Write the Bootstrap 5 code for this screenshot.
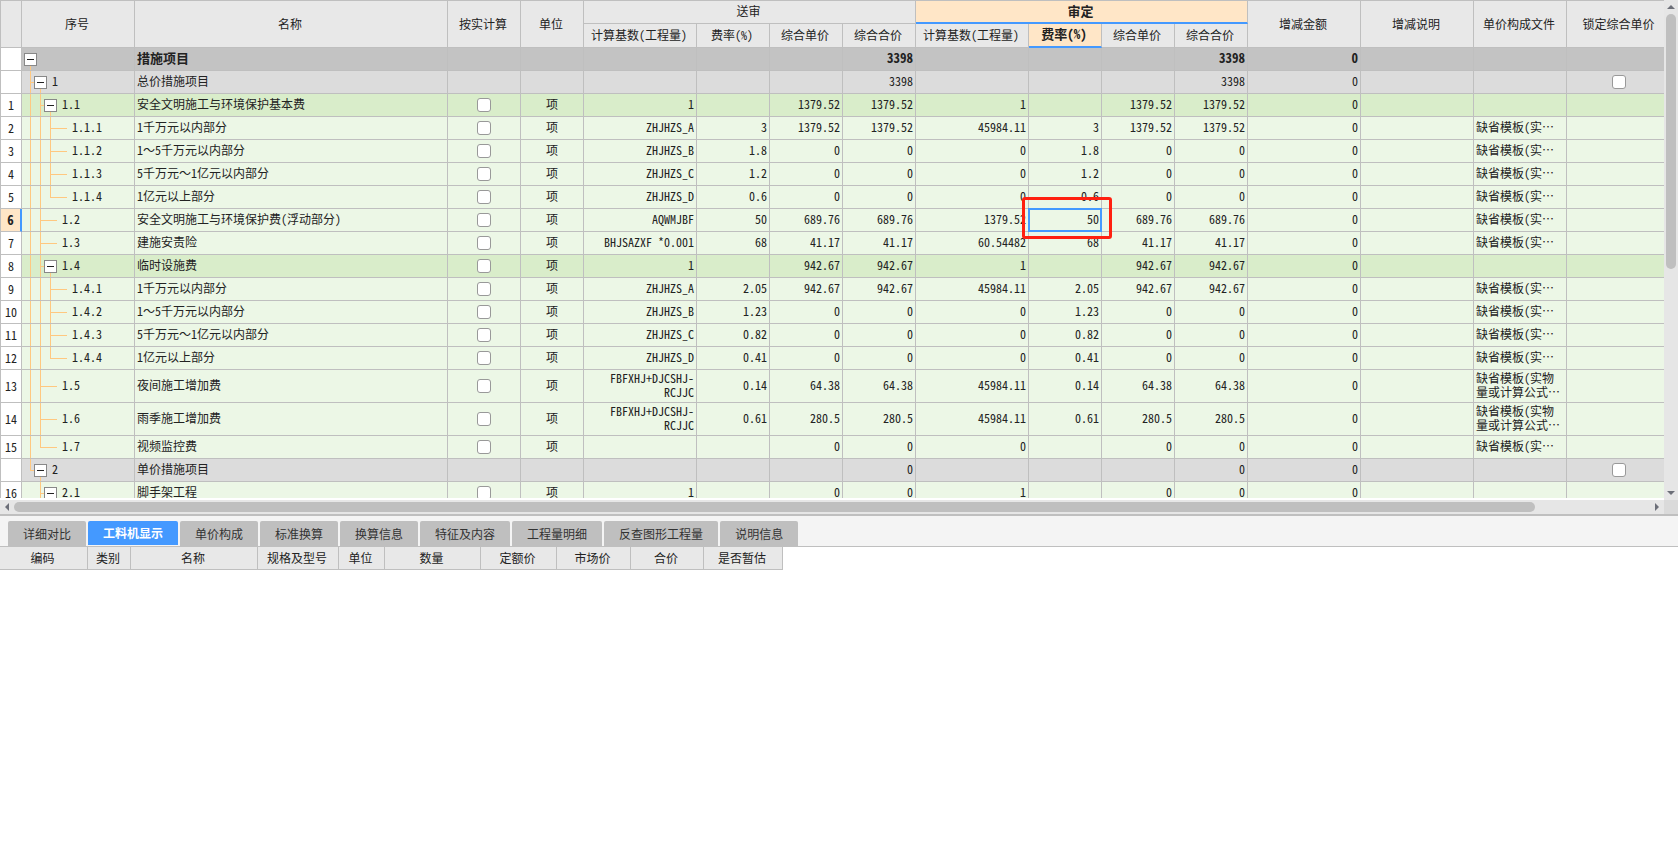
<!DOCTYPE html>
<html lang="zh-CN">
<head>
<meta charset="utf-8">
<meta name="viewport" content="width=device-width, initial-scale=1">
<title>措施项目</title>
<link href="https://cdn.jsdelivr.net/npm/bootstrap@5.3.0/dist/css/bootstrap.min.css" rel="stylesheet">
<style>
:root{--line:#bfbfbf;--head:#e8e8e8;--blue:#4499ff;--peach:#ffe6c7;--tree:#ffc880}
body{font:12px/14px "Noto Sans Mono CJK SC","Liberation Sans","Noto Sans CJK SC",sans-serif;color:#222;background:#fff}
.sheet{table-layout:fixed;border-collapse:separate;border-spacing:0;white-space:nowrap}
.sheet th,.sheet td{height:23px;padding:0 2px;border:0 solid var(--line);border-width:0 1px 1px 0;vertical-align:middle;overflow:hidden}
.sheet td{padding-bottom:2px}
.sheet thead th{background:var(--head);font-weight:400;text-align:center;padding:0 3px 0 1px}
.view{overflow:auto;scrollbar-width:none;border:solid var(--line);border-width:1px 0 0 1px;margin-bottom:2px}
.view::-webkit-scrollbar{display:none}
.main-sheet{width:100%;min-width:1300px}
.main-sheet thead .edge,.main-sheet td:last-child{border-right:0;padding-left:6px;padding-right:0}
.main-sheet thead th[colspan],.main-sheet thead tr:nth-child(2) th{padding-bottom:2px}
.main-sheet thead tr:nth-child(2) th{height:24px}
.c-no{width:21px}.c-l{width:113px}.c-s{width:73px}.c-u{width:63px}.c-f{width:93px}.c-k{width:97px}
.main-sheet thead .picked{background:var(--peach);font-weight:700;font-size:13px;border-bottom:2px solid var(--blue)}
.main-sheet tbody th{background:#fff;font-weight:400;text-align:center;padding:0}
.main-sheet tbody th.picked{background:var(--peach);font-weight:700;font-size:13px;border-right:2px solid var(--blue)}
.r-root td{background:#c3c3c3;font-weight:700;font-size:13px}
.r-group td{background:#dcdcdc}
.r-sum td{background:#d9edca}
.r-item td{background:#ecf7e6}
.r-tall td{height:33px}
.sheet td.tree{padding:0 0 0 8px}
.code{padding:0 0 2px 5px}
.guide{width:10px;background-repeat:no-repeat}
.guide.v,.guide.tee,.guide.end{background-image:linear-gradient(var(--tree),var(--tree)),linear-gradient(var(--tree),var(--tree))}
.guide.v{background-size:1px 100%,0 0}
.guide.tee{background-size:1px 100%,100% 1px;background-position:0 0,0 50%}
.guide.end{background-size:1px 50%,100% 1px;background-position:0 0,0 50%}
.guide.leaf{width:17px}
.knot{width:13px;margin-left:-6px;background:linear-gradient(var(--tree),var(--tree)) 6px 100%/1px 50% no-repeat}
.toggle{width:13px;height:13px;border:1px solid #888;background:#fff;padding:0}
.toggle svg{width:11px;height:11px}
.tick{width:14px;height:14px;margin:0;border:1px solid #999;border-radius:2px;background:#fff;vertical-align:middle}
.sheet td.cursor{position:relative;overflow:visible}
.cursor::before{content:"";position:absolute;inset:-1px;border:2px solid var(--blue)}
.cursor::after{content:"";position:absolute;inset:-12px -11px -8px -7px;border:3px solid #ff2010;border-radius:3px;z-index:1}
.bar{background:#e6e6e6;color:#6c6f78}
.bar svg{display:block;flex:none}
.bar-y{width:14px}.bar-x{height:14px}
.thumb{background:#bfbfbf;border-radius:5px}
.bar-y .thumb{width:10px;height:54%}
.bar-x .thumb{height:10px;width:93%}
.corner{width:14px;background:#dadada}
.lower{height:343px}
.tabs{background:#f4f4f4;border-bottom:1px solid var(--line);padding:5px 8px 0;gap:2px;font-family:"Noto Sans CJK SC",sans-serif}
.tabs .nav-link{height:25px;padding:0 15px;border:0;border-radius:2px 2px 0 0;background:#bfbfbf;color:#333;line-height:24px}
.tabs .nav-link.active{background:var(--blue);color:#fff;font-weight:700;border-bottom:1px solid #f4f4f4}
.detail-sheet{width:783px}
</style>
</head>
<body class="vh-100 d-flex flex-column overflow-hidden">
<main class="flex-grow-1 d-flex flex-column border-bottom border-2" style="--bs-border-color:#bfbfbf;min-height:0">
  <div class="d-flex flex-grow-1" style="min-height:0">
    <div class="view flex-grow-1">
      <table class="sheet main-sheet">
        <colgroup><col class="c-no"><col class="c-l"><col><col class="c-s"><col class="c-u"><col class="c-l"><col class="c-s"><col class="c-s"><col class="c-s"><col class="c-l"><col class="c-s"><col class="c-s"><col class="c-s"><col class="c-l"><col class="c-l"><col class="c-f"><col class="c-k"></colgroup>
        <thead>
          <tr><th rowspan="2"></th><th rowspan="2">序号</th><th rowspan="2">名称</th><th rowspan="2">按实计算</th><th rowspan="2">单位</th><th colspan="4">送审</th><th colspan="4" class="picked">审定</th><th rowspan="2">增减金额</th><th rowspan="2">增减说明</th><th rowspan="2">单价构成文件</th><th rowspan="2" class="edge">锁定综合单价</th></tr>
          <tr><th>计算基数(工程量)</th><th>费率(%)</th><th>综合单价</th><th>综合合价</th><th>计算基数(工程量)</th><th class="picked">费率(%)</th><th>综合单价</th><th>综合合价</th></tr>
        </thead>
        <tbody id="rows"></tbody>
      </table>
    </div>
    <div class="bar bar-y d-flex flex-column align-items-center">
      <svg width="14" height="14"><path d="M3 9 7 5l4 4z" fill="currentColor"/></svg>
      <div class="flex-grow-1"><div class="thumb"></div></div>
      <svg width="14" height="14"><path d="M3 5h8L7 9z" fill="currentColor"/></svg>
    </div>
  </div>
  <div class="d-flex">
    <div class="bar bar-x d-flex align-items-center flex-grow-1">
      <svg width="14" height="14"><path d="M9 3v8L5 7z" fill="currentColor"/></svg>
      <div class="flex-grow-1"><div class="thumb"></div></div>
      <svg width="14" height="14"><path d="M5 3v8l4-4z" fill="currentColor"/></svg>
    </div>
    <div class="corner"></div>
  </div>
</main>
<section class="lower flex-shrink-0">
  <ul class="nav tabs">
    <li><button class="nav-link" type="button">详细对比</button></li>
    <li><button class="nav-link active" type="button">工料机显示</button></li>
    <li><button class="nav-link" type="button">单价构成</button></li>
    <li><button class="nav-link" type="button">标准换算</button></li>
    <li><button class="nav-link" type="button">换算信息</button></li>
    <li><button class="nav-link" type="button">特征及内容</button></li>
    <li><button class="nav-link" type="button">工程量明细</button></li>
    <li><button class="nav-link" type="button">反查图形工程量</button></li>
    <li><button class="nav-link" type="button">说明信息</button></li>
  </ul>
  <table class="sheet detail-sheet">
    <colgroup><col width="88"><col width="43"><col width="127"><col width="81"><col width="46"><col width="96"><col width="76"><col width="74"><col width="73"><col width="79"></colgroup>
    <thead><tr><th>编码</th><th>类别</th><th>名称</th><th>规格及型号</th><th>单位</th><th>数量</th><th>定额价</th><th>市场价</th><th>合价</th><th>是否暂估</th></tr></thead>
  </table>
</section>
<script>
const F = '缺省模板(实…', F2 = '缺省模板(实物<br>量或计算公式…', W = 'FBFXHJ+DJCSHJ-<br>RCJJC';
// kind, row number, guides, code, name, [submitted x4], [approved x4], file
// guides: v line, t tee, e end, space none; "+" closes with an expander
const data = [
 ['root','','+','','措施项目',['','','','3398'],['','','','3398'],''],
 ['group','','t+','1','总价措施项目',['','','','3398'],['','','','3398'],''],
 ['sum',1,'vt+','1.1','安全文明施工与环境保护基本费',['1','','1379.52','1379.52'],['1','','1379.52','1379.52'],''],
 ['item',2,'vvt','1.1.1','1千万元以内部分',['ZHJHZS_A','3','1379.52','1379.52'],['45984.11','3','1379.52','1379.52'],F],
 ['item',3,'vvt','1.1.2','1～5千万元以内部分',['ZHJHZS_B','1.8','0','0'],['0','1.8','0','0'],F],
 ['item',4,'vvt','1.1.3','5千万元～1亿元以内部分',['ZHJHZS_C','1.2','0','0'],['0','1.2','0','0'],F],
 ['item',5,'vve','1.1.4','1亿元以上部分',['ZHJHZS_D','0.6','0','0'],['0','0.6','0','0'],F],
 ['item',6,'vt','1.2','安全文明施工与环境保护费(浮动部分)',['AQWMJBF','50','689.76','689.76'],['1379.52','50','689.76','689.76'],F],
 ['item',7,'vt','1.3','建施安责险',['BHJSAZXF *0.001','68','41.17','41.17'],['60.54482','68','41.17','41.17'],F],
 ['sum',8,'vt+','1.4','临时设施费',['1','','942.67','942.67'],['1','','942.67','942.67'],''],
 ['item',9,'vvt','1.4.1','1千万元以内部分',['ZHJHZS_A','2.05','942.67','942.67'],['45984.11','2.05','942.67','942.67'],F],
 ['item',10,'vvt','1.4.2','1～5千万元以内部分',['ZHJHZS_B','1.23','0','0'],['0','1.23','0','0'],F],
 ['item',11,'vvt','1.4.3','5千万元～1亿元以内部分',['ZHJHZS_C','0.82','0','0'],['0','0.82','0','0'],F],
 ['item',12,'vve','1.4.4','1亿元以上部分',['ZHJHZS_D','0.41','0','0'],['0','0.41','0','0'],F],
 ['item r-tall',13,'vt','1.5','夜间施工增加费',[W,'0.14','64.38','64.38'],['45984.11','0.14','64.38','64.38'],F2],
 ['item r-tall',14,'vt','1.6','雨季施工增加费',[W,'0.61','280.5','280.5'],['45984.11','0.61','280.5','280.5'],F2],
 ['item',15,'ve','1.7','视频监控费',['','','0','0'],['0','','0','0'],F],
 ['group','','e+','2','单价措施项目',['','','','0'],['','','','0'],''],
 ['item',16,' t+','2.1','脚手架工程',['1','','0','0'],['1','','0','0'],'']
];
const minus = '<svg viewBox="0 0 11 11" class="d-block"><path d="M2 5.5h7" stroke="#222"/></svg>';
const names = {v:'v', t:'tee', e:'end', ' ':''};
const tick = label => `<input type="checkbox" class="tick form-check-input" aria-label="${label}">`;
document.getElementById('rows').innerHTML = data.map(([kind,no,g,code,name,a,b,file]) => {
  const open = g.endsWith('+'), lines = [...g.replace('+','')];
  const tree = lines.map((c,i) => `<span class="guide ${names[c]}${!open && i==lines.length-1 ? ' leaf' : ''}"></span>`).join('')
    + (open ? `<span class="knot d-flex align-items-center"><button type="button" class="toggle" aria-label="折叠 ${name}">${minus}</button></span>` : '');
  const nums = list => list.map(v => `<td class="text-end">${v}</td>`).join('');
  return `<tr class="r-${kind}"><th${no==6?' class="picked"':''}>${no}</th>
  <td class="tree"><div class="d-flex h-100">${tree}<span class="code align-self-center">${code}</span></div></td>
  <td>${name}</td><td class="text-center">${no?tick('按实计算 '+code):''}</td><td class="text-center">${no?'项':''}</td>${nums(a)}${
  no==6 ? nums(b).replace('<td class="text-end">50','<td class="text-end cursor">50') : nums(b)}
  <td class="text-end">0</td><td></td><td>${file}</td><td class="text-center">${kind=='group'?tick('锁定综合单价 '+code):''}</td></tr>`;
}).join('');
</script>
<script src="https://cdn.jsdelivr.net/npm/bootstrap@5.3.0/dist/js/bootstrap.bundle.min.js"></script>
</body>
</html>
